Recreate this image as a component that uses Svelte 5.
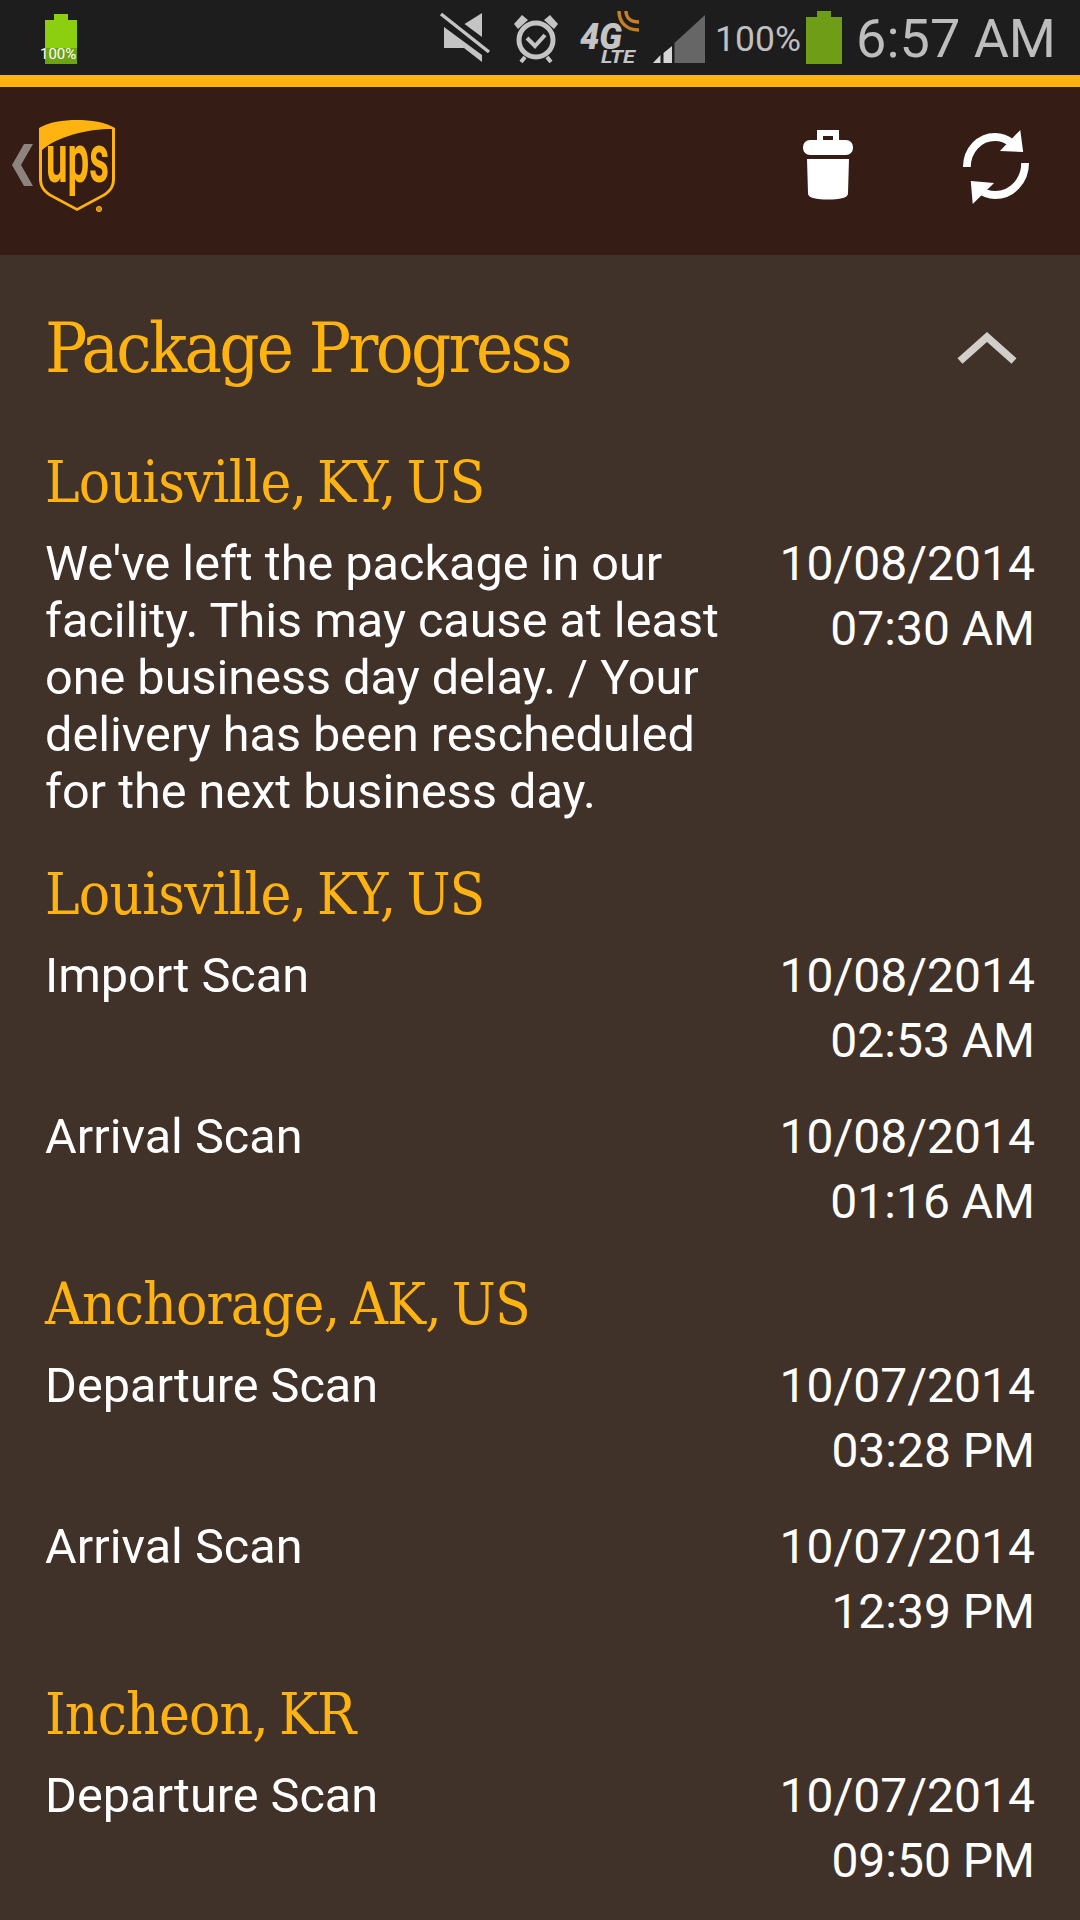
<script>
  const sections = [
    { city: 'Louisville, KY, US', rows: [
      { lines: ["We've left the package in our", 'facility. This may cause at least', 'one business day delay. / Your', 'delivery has been rescheduled', 'for the next business day.'], date: '10/08/2014', time: '07:30 AM' }
    ]},
    { city: 'Louisville, KY, US', rows: [
      { lines: ['Import Scan'], date: '10/08/2014', time: '02:53 AM' },
      { lines: ['Arrival Scan'], date: '10/08/2014', time: '01:16 AM' }
    ]},
    { city: 'Anchorage, AK, US', rows: [
      { lines: ['Departure Scan'], date: '10/07/2014', time: '03:28 PM' },
      { lines: ['Arrival Scan'], date: '10/07/2014', time: '12:39 PM' }
    ]},
    { city: 'Incheon, KR', rows: [
      { lines: ['Departure Scan'], date: '10/07/2014', time: '09:50 PM' }
    ]}
  ];
</script>

<div class="screen">
  <header class="status">
    <div class="mini-batt">
      <svg width="34" height="50" viewBox="0 0 34 50">
        <path d="M10 0h14v6h9v44H1V6h9z" fill="#8ccf10" />
        <path d="M1 34h32v16H1z" fill="#6da315" />
      </svg>
      <span>100%</span>
    </div>
    <div class="spring"></div>
    <svg class="ic mute" width="50" height="50" viewBox="0 0 50 50" fill="#c4c4c4">
      <path d="M24.5 11 42 0v24z" />
      <path d="M4 14 42 42v7L24 35H4z" />
      <path d="M1 1 49 39" stroke="#c4c4c4" stroke-width="3.5" fill="none" />
    </svg>
    <svg class="ic alarm" width="48" height="50" viewBox="0 0 48 50" fill="none" stroke="#c4c4c4">
      <circle cx="24" cy="27" r="17" stroke-width="5" />
      <path d="M13 44l-4 5M35 44l4 5" stroke-width="4" />
      <path d="M2 11 10 2l6 5-10 9zM46 11 38 2l-6 5 10 9z" fill="#c4c4c4" stroke="none" />
      <path d="M15 25l8 8 10-11" stroke-width="4" />
    </svg>
    <svg class="ic g4" width="60" height="54" viewBox="0 0 60 54">
      <path d="M39 1c0 11 7 19 20 19M46 1c0 7 5 11 13 11" stroke="#c47f25" stroke-width="3.5" fill="none" />
      <text x="0" y="39" class="g4-big" textLength="42" lengthAdjust="spacingAndGlyphs">4G</text>
      <text x="21" y="53" class="g4-small" textLength="34" lengthAdjust="spacingAndGlyphs">LTE</text>
    </svg>
    <svg class="ic signal" width="52" height="48" viewBox="0 0 52 48">
      <path d="M21.5 48V28L52 0v48z" fill="#666" />
      <path d="M0 48l7.5-8v8zM10.5 48V38l8.5-7v17z" fill="#d6d6d6" />
    </svg>
    <span class="pct">100%</span>
    <svg class="ic batt" width="36" height="53" viewBox="0 0 36 53">
      <path d="M11 0h14v6h11v47H0V6h11z" fill="#6f9d18" />
    </svg>
    <span class="clock">6:57 AM</span>
  </header>

  <nav class="bar">
    <svg class="back" width="22" height="42" viewBox="0 0 22 42">
      <path d="M12 0h9L9 21l12 21h-9L0 21z" fill="#8d8480" />
    </svg>
    <svg class="logo" width="78" height="93" viewBox="0 0 78 93">
      <path d="M39 1C25 1 11 3 1 9v51c0 8 4 13 10 17l28 15 28-15c6-4 10-9 10-17V9C67 3 53 1 39 1z" fill="#ffb310" />
      <path d="M74 10v50c0 7-3 11-9 15L39 89 13 75c-6-4-9-8-9-15V31C20 17 50 10 74 10z" fill="#351c15" />
      <text x="8" y="63" class="ups" textLength="63" lengthAdjust="spacingAndGlyphs">ups</text>
      <circle cx="61" cy="90" r="2.6" fill="#c98a12" stroke="#ffb310" stroke-width="1" />
    </svg>
    <div class="spring"></div>
    <svg class="trash" width="50" height="70" viewBox="0 0 50 70" fill="#fff">
      <path fill-rule="evenodd" d="M14 0h22v11h-6V6H20v5h-6z" />
      <rect x="0" y="10" width="50" height="15" rx="7" />
      <path d="M4 29h42l-1 34c0 3-2 4-5 5-9 2-21 2-30 0-3-1-5-2-5-5z" />
    </svg>
    <svg class="sync" width="66" height="74" viewBox="0 0 68 74" preserveAspectRatio="none" fill="none" stroke="#fff" stroke-width="8">
      <path d="M4 37C4 20 17 7 33 7c7 0 12 2 17 6" />
      <path d="M64 33c0 17-13 32-31 32-7 0-12-2-17-6" />
      <path d="M59 0l3 22-24-1zM10 74 8 51l24 2z" fill="#fff" stroke="none" />
    </svg>
  </nav>

  <main class="content">
    <div class="title-row">
      <h1>Package Progress</h1>
      <svg class="up" width="60" height="32" viewBox="0 0 60 32">
        <path d="M3 29 30 5l27 24" fill="none" stroke="#d2cfcb" stroke-width="7.5" />
      </svg>
    </div>
    {#each sections as s}
      <section>
        <h2>{s.city}</h2>
        {#each s.rows as r}
          <div class="row">
            <div class="desc">
              {#each r.lines as l}<div>{l}</div>{/each}
            </div>
            <div class="when">
              <div>{r.date}</div>
              <div>{r.time}</div>
            </div>
          </div>
        {/each}
      </section>
    {/each}
  </main>
</div>

<style>
  :global(body) { margin: 0; background: #403129; }
  .screen { width: 1080px; height: 1920px; overflow: hidden; background: #403129; font-family: Roboto, sans-serif; }
  .spring { flex: 1; }
  .status { height: 75px; background: #1d1d1d; display: flex; align-items: flex-start; box-sizing: border-box; position: relative; }
  .mini-batt { position: relative; margin: 14px 0 0 44px; width: 34px; height: 50px; }
  .mini-batt svg { display: block; }
  .mini-batt span { position: absolute; left: -4px; top: 31px; font-size: 15px; line-height: 18px; color: #fff; }
  .ic { display: block; flex: none; overflow: visible; }
  .mute { margin: 13px 0 0 3px; }
  .alarm { margin: 13px 0 0 22px; }
  .g4 { margin: 10px 0 0 20px; }
  .g4-big { font: italic 900 37px Roboto, sans-serif; fill: #c4c4c4; }
  .g4-small { font: italic 700 19px Roboto, sans-serif; fill: #c4c4c4; }
  .signal { margin: 15px 0 0 13px; }
  .pct { font-size: 35.5px; line-height: 40px; color: #c0c0c0; margin: 19px 0 0 10px; width: 86px; white-space: nowrap; }
  .batt { margin: 11px 0 0 5px; }
  .clock { font-size: 54px; line-height: 62px; color: #bdbdbd; margin: 8px 24px 0 14px; white-space: nowrap; }
  .bar { height: 168px; background: #351c15; border-top: 12px solid #ffb310; display: flex; align-items: flex-start; }
  .back { margin: 57px 0 0 12px; display: block; }
  .logo { margin: 32px 0 0 4px; display: block; overflow: visible; }
  .ups { font: 700 68px Roboto, sans-serif; fill: #ffb310; }
  .trash { margin: 43px 0 0 0; display: block; }
  .sync { margin: 43px 51px 0 110px; display: block; }
  .content { padding: 51px 45px 0; }
  .title-row { display: flex; justify-content: space-between; align-items: center; height: 84px; margin-bottom: 57px; }
  h1 { margin: 0; font: 400 70px/84px "DejaVu Serif Condensed", "DejaVu Serif", serif; font-stretch: condensed; letter-spacing: -2.7px; color: #ffb310; white-space: nowrap; }
  .up { margin-right: 18px; }
  section { margin-top: 35px; }
  h2 { margin: 0 0 18px; font: 400 58px/70px "DejaVu Serif Condensed", "DejaVu Serif", serif; font-stretch: condensed; letter-spacing: -0.8px; word-spacing: -5px; color: #ffb310; white-space: nowrap; }
  .row { display: flex; justify-content: space-between; margin-bottom: 35px; }
  section .row:last-child { margin-bottom: 0; }
  .desc { font-size: 48.6px; line-height: 57px; color: #fff; white-space: nowrap; padding-bottom: 4px; }
  .when { font-size: 48px; line-height: 65px; color: #fff; text-align: right; margin: -4px 0 0 0; white-space: nowrap; }
</style>
